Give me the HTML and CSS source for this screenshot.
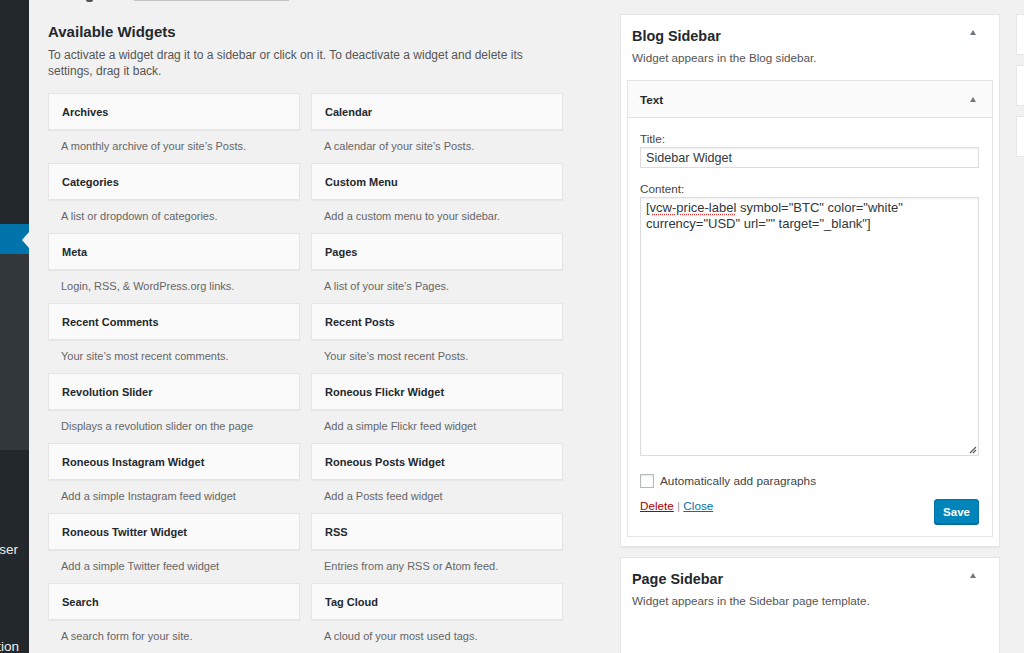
FILE: index.html
```html
<!DOCTYPE html>
<html lang="en">
<head>
<meta charset="utf-8">
<title>Widgets</title>
<link rel="stylesheet" href="styles.css">
</head>
<body>
<div class="wrap">
  <nav class="adminmenu">
    <div class="m-top"></div>
    <div class="m-current"></div>
    <div class="m-sub"></div>
    <div class="m-rest">
      <div class="m-item m-item-a"><span>Browser</span></div>
      <div class="m-item m-item-b"><span>Collection</span></div>
    </div>
  </nav>
  <main class="content">
    <div class="topfrag">
      <span class="topfrag-dot"></span>
      <span class="topfrag-line"></span>
    </div>
    <div class="columns">
      <section class="available">
        <h2 class="av-title">Available Widgets</h2>
        <p class="av-desc">To activate a widget drag it to a sidebar or click on it. To deactivate a widget and delete its settings, drag it back.</p>
        <div class="widget-grid">
          <div class="widget"><div class="widget-top">Archives</div><div class="widget-desc">A monthly archive of your site’s Posts.</div></div>
          <div class="widget"><div class="widget-top">Calendar</div><div class="widget-desc">A calendar of your site’s Posts.</div></div>
          <div class="widget"><div class="widget-top">Categories</div><div class="widget-desc">A list or dropdown of categories.</div></div>
          <div class="widget"><div class="widget-top">Custom Menu</div><div class="widget-desc">Add a custom menu to your sidebar.</div></div>
          <div class="widget"><div class="widget-top">Meta</div><div class="widget-desc">Login, RSS, &amp; WordPress.org links.</div></div>
          <div class="widget"><div class="widget-top">Pages</div><div class="widget-desc">A list of your site’s Pages.</div></div>
          <div class="widget"><div class="widget-top">Recent Comments</div><div class="widget-desc">Your site’s most recent comments.</div></div>
          <div class="widget"><div class="widget-top">Recent Posts</div><div class="widget-desc">Your site’s most recent Posts.</div></div>
          <div class="widget"><div class="widget-top">Revolution Slider</div><div class="widget-desc">Displays a revolution slider on the page</div></div>
          <div class="widget"><div class="widget-top">Roneous Flickr Widget</div><div class="widget-desc">Add a simple Flickr feed widget</div></div>
          <div class="widget"><div class="widget-top">Roneous Instagram Widget</div><div class="widget-desc">Add a simple Instagram feed widget</div></div>
          <div class="widget"><div class="widget-top">Roneous Posts Widget</div><div class="widget-desc">Add a Posts feed widget</div></div>
          <div class="widget"><div class="widget-top">Roneous Twitter Widget</div><div class="widget-desc">Add a simple Twitter feed widget</div></div>
          <div class="widget"><div class="widget-top">RSS</div><div class="widget-desc">Entries from any RSS or Atom feed.</div></div>
          <div class="widget"><div class="widget-top">Search</div><div class="widget-desc">A search form for your site.</div></div>
          <div class="widget"><div class="widget-top">Tag Cloud</div><div class="widget-desc">A cloud of your most used tags.</div></div>
        </div>
      </section>

      <section class="sidebars">
        <div class="sb-panel">
          <div class="sb-head">
            <h3 class="sb-title">Blog Sidebar</h3>
            <span class="arrow-up sb-arrow"></span>
          </div>
          <p class="sb-desc">Widget appears in the Blog sidebar.</p>
          <div class="text-widget">
            <div class="tw-top">
              <span class="tw-title">Text</span>
              <span class="arrow-up tw-arrow"></span>
            </div>
            <div class="tw-body">
              <label class="tw-label">Title:</label>
              <div class="tw-input">Sidebar Widget</div>
              <label class="tw-label tw-label-content">Content:</label>
              <div class="tw-textarea">
                <span class="spell">[vcw-price-label</span> symbol="BTC" color="white"<br>currency="USD" url="" target="_blank"]
                <svg class="resize" width="8" height="8" viewBox="0 0 8 8"><path d="M1 7 L7 1 M4 7 L7 4" stroke="#555" stroke-width="1.1" fill="none"/></svg>
              </div>
              <div class="tw-check">
                <span class="checkbox"></span>
                <span class="check-label">Automatically add paragraphs</span>
              </div>
              <div class="tw-actions">
                <div class="tw-links"><a class="link-delete">Delete</a> <span class="sep">|</span> <a class="link-close">Close</a></div>
                <button class="btn-save">Save</button>
              </div>
            </div>
          </div>
        </div>
        <div class="sb-panel sb-panel-page">
          <div class="sb-head">
            <h3 class="sb-title">Page Sidebar</h3>
            <span class="arrow-up sb-arrow"></span>
          </div>
          <p class="sb-desc sb-desc-page">Widget appears in the Sidebar page template.</p>
        </div>
      </section>

      <aside class="more">
        <div class="more-box"></div>
        <div class="more-box"></div>
        <div class="more-box"></div>
      </aside>
    </div>
  </main>
</div>
</body>
</html>
```

FILE: styles.css
```css
* { box-sizing: border-box; }

html, body {
  margin: 0;
  padding: 0;
  height: 653px;
  overflow: hidden;
}

body {
  background: #f1f1f1;
  font-family: "Liberation Sans", Arial, sans-serif;
  color: #444;
}

.wrap {
  display: flex;
  height: 653px;
}

/* admin menu */
.adminmenu {
  width: 29px;
  flex: 0 0 29px;
  display: flex;
  flex-direction: column;
  background: #23282d;
  overflow: hidden;
}
.m-top { height: 224px; flex-shrink: 0; }
.m-current {
  height: 30px;
  flex-shrink: 0;
  background: #0073aa;
  position: relative;
}
.m-current::after {
  content: "";
  position: absolute;
  right: 0;
  top: 8px;
  border-style: solid;
  border-width: 8px 7px 8px 0;
  border-color: transparent #f1f1f1 transparent transparent;
}
.m-sub {
  height: 196px;
  flex-shrink: 0;
  background: #32373c;
}
.m-rest {
  flex: 1 1 auto;
  min-height: 0;
  display: flex;
  flex-direction: column;
  overflow: hidden;
}
.m-item {
  flex-shrink: 0;
  display: flex;
  justify-content: flex-end;
  white-space: nowrap;
  padding-right: 11px;
  color: #eee;
  font-size: 13.5px;
  line-height: 18px;
}
.m-item span { flex: 0 0 auto; }
.m-item-a { margin-top: 91px; }
.m-item-b { margin-top: 79px; padding-right: 10px; }

/* content */
.content {
  flex: 1;
  padding-left: 19px;
  min-width: 0;
}

.topfrag {
  height: 2px;
  display: flex;
  align-items: flex-start;
  margin-bottom: 20px;
}
.topfrag-dot {
  width: 7px;
  height: 2px;
  margin-left: 38px;
  background: #555;
  border-radius: 0 0 4px 4px;
}
.topfrag-line {
  width: 155px;
  height: 1px;
  margin-left: 41px;
  background: #c4c4c4;
}

.columns {
  display: flex;
  align-items: flex-start;
}

.available {
  width: 515px;
  flex: 0 0 515px;
  margin-right: 57px;
}

.av-title {
  margin: 0;
  font-size: 15px;
  line-height: 20px;
  font-weight: 700;
  color: #23282d;
}
.av-desc {
  margin: 5px 0 14px;
  font-size: 12px;
  line-height: 16px;
  color: #555;
}

.widget-grid {
  display: grid;
  grid-template-columns: 252px 252px;
  column-gap: 11px;
}

.widget-top {
  height: 37px;
  border: 1px solid #e5e5e5;
  background: #fafafa;
  box-shadow: 0 1px 1px rgba(0, 0, 0, 0.04);
  padding-left: 13px;
  font-size: 11px;
  font-weight: 700;
  line-height: 36px;
  color: #23282d;
}
.widget-desc {
  height: 33px;
  padding: 8px 12px 0 13px;
  font-size: 11px;
  line-height: 16px;
  color: #666;
}

/* sidebars */
.sidebars {
  width: 380px;
  flex: 0 0 380px;
  margin-top: -8px;
  margin-right: 16px;
}

.sb-panel {
  background: #fff;
  border: 1px solid #e5e5e5;
  box-shadow: 0 1px 1px rgba(0, 0, 0, 0.04);
  padding: 0 6px 9px;
}
.sb-panel-page {
  margin-top: 10px;
  height: 120px;
}

.sb-head {
  position: relative;
  padding: 12px 5px 0;
}
.sb-title {
  margin: 0;
  font-size: 14.4px;
  line-height: 18px;
  font-weight: 700;
  color: #23282d;
}
.arrow-up {
  position: absolute;
  width: 0;
  height: 0;
  border-style: solid;
  border-width: 0 3.5px 5px 3.5px;
  border-color: transparent transparent #72777c transparent;
}
.sb-arrow {
  right: 17px;
  top: 15px;
}

.sb-desc {
  margin: 5px 0 14px;
  padding-left: 5px;
  font-size: 11.7px;
  line-height: 16px;
  color: #555;
}
.sb-desc-page { margin-top: 5px; }

.text-widget {
  border: 1px solid #e5e5e5;
  background: #fff;
}
.tw-top {
  position: relative;
  height: 37px;
  background: #fafafa;
  border-bottom: 1px solid #e5e5e5;
  padding-left: 12px;
  line-height: 35px;
}
.tw-title {
  font-size: 11.7px;
  font-weight: 700;
  color: #23282d;
}
.tw-arrow {
  right: 16px;
  top: 16px;
}

.tw-body {
  padding: 13px 13px 12px 12px;
}
.tw-label {
  display: block;
  font-size: 11.7px;
  line-height: 16px;
  color: #444;
}
.tw-label-content {
  margin-top: 13px;
  margin-bottom: 0;
}
.tw-input {
  height: 21px;
  border: 1px solid #ddd;
  box-shadow: inset 0 1px 2px rgba(0, 0, 0, 0.07);
  padding-left: 5px;
  font-size: 12.6px;
  line-height: 20px;
  color: #32373c;
}
.tw-textarea {
  position: relative;
  height: 259px;
  border: 1px solid #ddd;
  box-shadow: inset 0 1px 2px rgba(0, 0, 0, 0.07);
  padding: 2px 5px;
  font-size: 13px;
  line-height: 16px;
  color: #32373c;
}
.spell {
  text-decoration: underline dotted #e33;
  text-underline-offset: 2px;
}
.resize {
  position: absolute;
  right: 1px;
  bottom: 1px;
}

.tw-check {
  display: flex;
  align-items: center;
  margin-top: 18px;
  height: 14px;
}
.checkbox {
  width: 14px;
  height: 14px;
  border: 1px solid #b4b9be;
  background: #fff;
  box-shadow: inset 0 1px 2px rgba(0, 0, 0, 0.1);
  margin-right: 6px;
}
.check-label {
  font-size: 11.8px;
  color: #444;
}

.tw-actions {
  display: flex;
  justify-content: space-between;
  align-items: flex-start;
  margin-top: 11px;
}
.tw-links {
  margin-top: -1px;
  font-size: 11.7px;
  line-height: 16px;
  color: #555;
}
.link-delete {
  color: #a00;
  text-decoration: underline;
}
.link-close {
  color: #0073aa;
  text-decoration: underline;
}
.sep { color: #999; }

.btn-save {
  height: 25px;
  width: 45px;
  padding: 0;
  background: #0085ba;
  border: 1px solid #0073aa;
  border-radius: 3px;
  box-shadow: 0 1px 0 #006799;
  color: #fff;
  font-family: "Liberation Sans", Arial, sans-serif;
  font-size: 11.5px;
  font-weight: 700;
  line-height: 22px;
}

/* right boxes */
.more {
  flex: 1;
  margin-top: -8px;
  display: flex;
  flex-direction: column;
  gap: 10px;
}
.more-box {
  height: 41px;
  background: #fff;
  border: 1px solid #e5e5e5;
  border-right: none;
}
```
